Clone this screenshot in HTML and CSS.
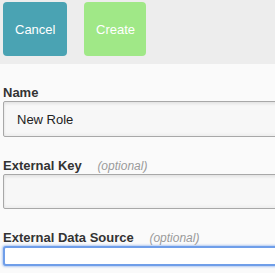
FILE: index.html
```html
<!DOCTYPE html>
<html lang="en">
<head>
    <meta charset="UTF-8">
    <meta name="viewport" content="width=device-width, initial-scale=1.0">
    <title>New Role</title>
    <link rel="stylesheet" href="styles.css">
</head>
<body>
    <div class="toolbar">
        <button class="btn btn-cancel">Cancel</button>
        <button class="btn btn-create">Create</button>
    </div>

    <form class="role-form">
        <div class="field">
            <label class="field-label">Name</label>
            <input class="field-input" type="text" value="New Role">
        </div>
        <div class="field">
            <label class="field-label">External Key <span class="optional">(optional)</span></label>
            <input class="field-input field-input-short" type="text">
        </div>
        <div class="field">
            <label class="field-label">External Data Source <span class="optional">(optional)</span></label>
            <input class="field-input field-input-focus" type="text">
        </div>
    </form>
</body>
</html>
```

FILE: styles.css
```css
* {
    margin: 0;
    padding: 0;
    box-sizing: border-box;
}

body {
    font-family: "Liberation Sans", Arial, sans-serif;
    background: #fafafa;
    color: #333;
    overflow: hidden;
}

.toolbar {
    display: flex;
    gap: 17px;
    height: 64px;
    padding: 2px 3px 0;
    background: #ededed;
}

.btn {
    height: 54px;
    padding: 0 12px;
    border: none;
    border-radius: 4px;
    color: white;
    font-family: inherit;
    font-size: 13px;
}

.btn-cancel {
    width: 64px;
    background: #4aa3b3;
}

.btn-create {
    width: 62px;
    background: #a0e887;
}

.role-form {
    padding: 21px 0 0 3px;
    width: 420px;
}

.field {
    margin-bottom: 21px;
}

.field-label {
    display: block;
    font-size: 13px;
    font-weight: bold;
    line-height: 16px;
    color: #333;
}

.optional {
    margin-left: 12px;
    font-size: 12px;
    font-weight: normal;
    font-style: italic;
    color: #9a9a9a;
}

.field-input {
    display: block;
    width: 100%;
    height: 36px;
    padding: 0 13px;
    border: 1px solid #a8a8a8;
    border-radius: 2px;
    background: #f7f7f7;
    box-shadow: inset 0 2px 3px rgba(0, 0, 0, 0.08), inset 0 -2px 3px rgba(0, 0, 0, 0.04);
    font-family: inherit;
    font-size: 13px;
    color: #222;
}

.field-input-short {
    height: 35px;
}

.field-input-focus {
    height: 20px;
    background: #fff;
    border: 2px solid #6f9ee9;
    border-radius: 3px;
    box-shadow: 0 0 2px 1px rgba(111, 158, 233, 0.5);
    outline: none;
}
```
